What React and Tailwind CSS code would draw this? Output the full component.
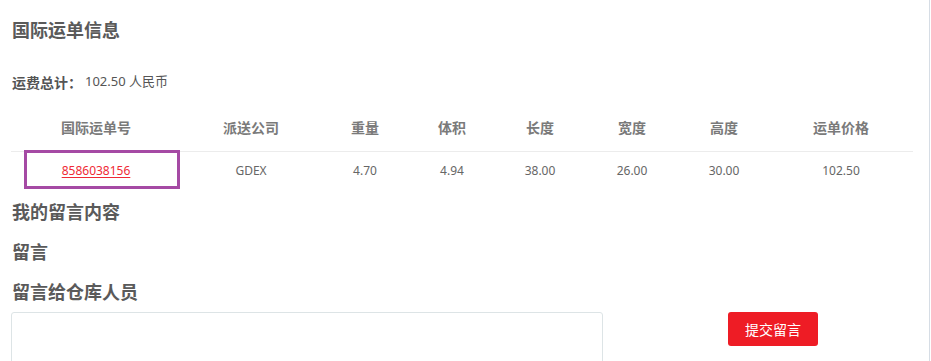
import React from "react";

const cols = [
  { label: "国际运单号", w: "w-[170px]" },
  { label: "派送公司", w: "w-[140px]" },
  { label: "重量", w: "w-[88px]" },
  { label: "体积", w: "w-[86px]" },
  { label: "长度", w: "w-[90px]" },
  { label: "宽度", w: "w-[94px]" },
  { label: "高度", w: "w-[90px]" },
  { label: "运单价格", w: "w-[144px]" },
];

const row = ["8586038156", "GDEX", "4.70", "4.94", "38.00", "26.00", "30.00", "102.50"];

const App = () => {
  return (
    <div className="w-[931px] h-[361px] overflow-hidden bg-white font-['Noto_Sans','Noto_Sans_CJK_SC',sans-serif]">
      <div className="w-[930px] h-full border-r border-[#d6dde5] pl-[11px] pt-[18px]">
        {/* <!-- 运单信息 --> */}
        <h2 className="pl-px text-[18px] leading-6 font-bold text-[#5a5a5a]">国际运单信息</h2>
        <div className="flex items-center mt-[30px] pl-px h-5 text-[#555]">
          <span className="text-[14px] font-bold">运费总计：</span>
          <span className="ml-[3px] text-[13px]">102.50 人民币</span>
        </div>

        <div className="w-[902px] mt-[11px]">
          <div className="flex h-[49px] items-center border-b border-[#ececec]">
            {cols.map((c) => (
              <div key={c.label} className={`${c.w} text-center text-[14px] font-bold text-[#7a7a7a]`}>
                {c.label}
              </div>
            ))}
          </div>
          <div className="flex h-[37px] items-center text-[12px] text-[#666]">
            {row.map((v, i) => (
              <div key={i} className={`${cols[i].w} text-center relative`}>
                {i === 0 ? (
                  <>
                    <a href="#" className="text-[#ef2a35] underline underline-offset-2">
                      {v}
                    </a>
                    <div className="absolute left-[13px] top-[-12px] w-[156px] h-[39px] border-[3px] border-[#a54aa4]"></div>
                  </>
                ) : (
                  v
                )}
              </div>
            ))}
          </div>
        </div>

        {/* <!-- 留言 --> */}
        <h3 className="mt-[11px] pl-px text-[18px] leading-6 font-bold text-[#5a5a5a]">我的留言内容</h3>
        <h3 className="mt-4 pl-px text-[18px] leading-6 font-bold text-[#5a5a5a]">留言</h3>
        <h3 className="mt-4 pl-px text-[18px] leading-6 font-bold text-[#5a5a5a]">留言给仓库人员</h3>
        <div className="flex items-start mt-[8px]">
          <textarea className="w-[592px] h-[80px] border border-[#dde4e6] rounded-[3px] resize-none outline-none"></textarea>
          <button className="ml-[125px] w-[90px] h-[34px] rounded-[3px] bg-[#ee1c25] text-white text-[14px]">
            提交留言
          </button>
        </div>
      </div>
    </div>
  );
};

export default App;
